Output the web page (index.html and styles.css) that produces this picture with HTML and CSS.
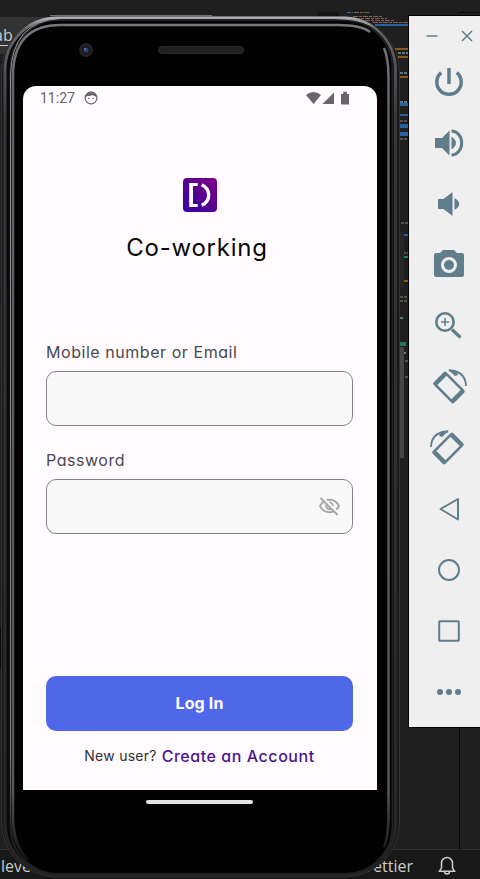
FILE: index.html
```html
<!DOCTYPE html>
<html lang="en">
<head>
<meta charset="utf-8">
<title>Co-working</title>
<link rel="stylesheet" href="styles.css">
</head>
<body>
<div class="desktop">
  <svg class="editor" width="480" height="879" viewBox="0 0 480 879" aria-hidden="true">
    <path fill="#1f1f1f" d="M0 0h480v879H0z"/>
    <path fill="#333" d="M0 17h45v37H0z"/>
    <path fill="#181818" d="M0 850h480v29H0z"/>
    <path fill="#333" d="M0 849h480v1H0z"/>
    <path fill="#0a0a0a" d="M459 12h1v838h-1zM459 12h21v1h-21zM0 62h10v1H0zM0 628h3v40H0zM0 387h3v1H0z"/>
    <path fill="#141414" d="M318 12h21v6h-21z"/>
    <path fill="#77717a" d="M50 15h162v1H50z"/>
    <path fill="none" stroke="#286ba5" stroke-width="1" stroke-dasharray="4 1" d="M347 12.500h6"/>
    <path fill="none" stroke="#8b5c50" stroke-width="1" stroke-dasharray="5 1 3 1" d="M354 12.500h15M353 16.500h30M355 18.500h32M365 20.500h30M373 22.500h35"/>
    <path fill="#2860a0" d="M375 24h33v2h-33zM400 103h8v3h-8zM400 114h8v2h-8zM400 124h8v4h-8zM400 132h8v4h-8zM403 234h5v2h-5z"/>
    <path fill="#8a5817" d="M395 48h13v2h-13zM398 56h10v2h-10zM400 76h8v2h-8zM403 280h5v2h-5z"/>
    <path fill="none" stroke="#557b85" stroke-width="2" stroke-dasharray="3 1" d="M398 53h10M400 73h8M400 102h8M400 318h4M403 353h4"/>
    <path fill="none" stroke="#68645a" stroke-width="1.500" stroke-dasharray="3 1" d="M400 121h8M400 139h8M401 223h7M403 253h5M400 297h8M400 301h8M405 361h3M405 377h3"/>
    <path fill="#237565" d="M403 256h5v2h-5zM400 342h6v4h-6z"/>
  </svg>
  <span class="menu-tail">ab</span>
  <span class="status-left">leve</span>
  <span class="status-right">Prettier</span>
  <svg class="bell" width="18" height="21" viewBox="0 0 18 21"><path d="M3.500 13V8a5.500 5.500 0 0 1 11 0v5l2 3.200h-15zM6.500 16.500a2.500 2.500 0 0 0 5 0"/></svg>

  <main class="phone">
    <svg class="shell" width="408" height="867" viewBox="0 12 408 867" aria-hidden="true">
      <defs>
        <linearGradient id="rim" x2="0" y2="1"><stop stop-color="#b0b4b6"/><stop offset=".012" stop-color="#656769"/><stop offset=".12" stop-color="#38383b"/><stop offset="1" stop-color="#252525"/></linearGradient>
        <linearGradient id="inner" gradientUnits="userSpaceOnUse" x1="0" y1="24" x2="0" y2="860"><stop stop-color="#77777c"/><stop offset=".1" stop-color="#626268"/><stop offset=".92" stop-color="#55555a"/><stop offset="1" stop-color="#111"/></linearGradient>
        <linearGradient id="edge" gradientUnits="userSpaceOnUse" x1="0" y1="18" x2="0" y2="840"><stop stop-color="#a2a5a8"/><stop offset=".1" stop-color="#8b8d90"/><stop offset=".9" stop-color="#77797c"/><stop offset="1" stop-color="#222"/></linearGradient>
      </defs>
      <path fill="#262626" d="M399 232h5v55h-5z"/><path fill="#464648" d="M400 347h4v111h-4z"/>
      <rect x="1.500" y="17" width="398" height="860" rx="55" fill="#171717" stroke="#333"/>
      <rect x="5" y="18" width="390.500" height="857" rx="52" fill="#090909" stroke="url(#rim)" stroke-width="3"/>
      <rect x="10.500" y="20" width="382" height="854" rx="48" fill="#020202" stroke="#202022" stroke-width="2"/>
      <path fill="none" stroke="url(#inner)" stroke-width="2.500" d="M28 860Q13 845 13 816V76Q13 25 61 25H338Q361 25 370 32M384 48Q388.500 58 388.500 78V820Q388 838 384 847"/>
      <path fill="none" stroke="url(#edge)" stroke-width="1" d="M20 850Q10.500 838 10.500 815V75Q12 21 60 18.500H335Q357 19 370 25"/>
    </svg>
    <div class="bezel">
      <svg width="14" height="14" viewBox="0 0 14 14"><circle cx="7" cy="7" r="7" fill="#222225"/><circle cx="7" cy="7" r="4" fill="#17192b"/><circle cx="7" cy="7" r="2.500" fill="#304371"/><circle cx="6" cy="6" r="1" fill="#667ca2"/></svg>
      <div class="speaker"></div>
    </div>
    <section class="screen">
      <header class="status">
        <span class="clock">11:27</span>
        <svg width="14" height="14" viewBox="0 0 14 14"><circle cx="7" cy="7" r="5.900" fill="none" stroke="#68666b" stroke-width="1.200"/><path fill="#68666b" d="M1 6Q2 1 7 .7T13 6L10 5 8.500 4 6 5 4 5z"/><circle cx="4.800" cy="7.500" r=".7" fill="#68666b"/><circle cx="9.200" cy="7.500" r=".7" fill="#68666b"/></svg>
        <svg class="signals" width="45" height="14" viewBox="0 0 45 14"><path fill="#68666b" d="M0 4Q7.500-2 15 4L7.500 13zM16.500 13L28 1.500V13zM35 3h2.300V.8h3.600V3H43v10.500h-8z"/></svg>
      </header>
      <div class="brand">
        <svg width="34" height="34" viewBox="0 0 34 34"><defs><linearGradient id="logo" x1="0" y1="1" x2="1" y2="0"><stop stop-color="#3900a6"/><stop offset=".5" stop-color="#57008e"/><stop offset="1" stop-color="#82008b"/></linearGradient></defs><rect width="34" height="34" rx="4" fill="url(#logo)"/><path fill="#fff" d="M6.200 5h8.500v3H10v18h4.700v3H6.200z"/><path fill="none" stroke="#fff" stroke-width="3.400" d="M18.700 6.700Q25.700 10 25.700 17T18.700 27.300"/></svg>
        <h1>Co-working</h1>
      </div>
      <form class="login">
        <label for="user">Mobile number or Email</label>
        <div class="field"><input id="user" type="text"></div>
        <label for="pass">Password</label>
        <div class="field"><input id="pass" type="password">
          <svg width="23" height="23" viewBox="0 0 24 24"><path fill="#a6a6a6" d="M12 6a9.770 9.770 0 0 1 8.820 5.500 9.650 9.650 0 0 1-2.410 3.120l1.410 1.410A11.800 11.800 0 0 0 23 11.500C21.270 7.110 17 4 12 4c-1.270 0-2.490.2-3.640.57l1.650 1.650C10.660 6.090 11.320 6 12 6zm-1.070 1.140L13 9.210c.57.25 1.030.71 1.280 1.280l2.070 2.070c.08-.34.140-.7.140-1.070C16.500 9.010 14.480 7 12 7c-.37 0-.72.05-1.070.14zM2.010 3.870l2.680 2.680A11.700 11.700 0 0 0 1 11.500C2.730 15.890 7 19 12 19c1.520 0 2.980-.29 4.320-.82l3.420 3.420 1.410-1.410L3.420 2.450zm7.500 7.500 2.610 2.610c-.04.01-.8.020-.12.020a2.500 2.500 0 0 1-2.500-2.500c0-.5.010-.8.010-.13zm-3.400-3.400 1.750 1.750a4.600 4.600 0 0 0-.36 1.780 4.500 4.500 0 0 0 6.270 4.140l.98.98c-.88.24-1.800.38-2.750.38a9.770 9.770 0 0 1-8.820-5.500c.7-1.430 1.720-2.610 2.930-3.530z"/></svg>
        </div>
        <button type="button">Log In</button>
        <p><span>New user?</span><a href="#">Create an Account</a></p>
      </form>
    </section>
    <div class="home-bar"></div>
  </main>

  <aside class="tools">
    <div class="window-controls">
      <svg width="12" height="12" viewBox="0 0 12 12"><path d="M.5 6h11"/></svg>
      <svg width="12" height="12" viewBox="0 0 12 12"><path d="M1 1l10 10M11 1L1 11"/></svg>
    </div>
    <div class="tool"><svg viewBox="-18 -18 36 36"><path class="line thick" d="M-7.800-9.300A12.200 12.200 0 1 0 7.800-9.300M0-14V2"/></svg></div>
    <div class="tool"><svg viewBox="-18 -18 36 36"><path class="fill" d="M-14-5h7l7.500-7.500v25l-7.500-7.500h-7zM2.500-6.500q9 6.500 0 13z"/><path class="line" stroke-width="3" d="M2.500-12a10.200 12 0 0 1 0 24"/></svg></div>
    <div class="tool"><svg viewBox="-18 -18 36 36"><path class="fill" d="M-11-5h5.500l9-7v24l-9-7H-11zM5.500-6q9.500 6 0 12z"/></svg></div>
    <div class="tool"><svg viewBox="-18 -18 36 36"><path fill-rule="evenodd" class="fill" d="M-13-12h4l3-3h11l3 3h5q2 0 2 2v20q0 2-2 2h-26q-2 0-2-2v-20q0-2 2-2zM0-8A8 8 0 1 0 0 8A8 8 0 0 0 0-8zM0-5A5 5 0 1 1 0 5A5 5 0 0 1 0-5z"/></svg></div>
    <div class="tool"><svg viewBox="-18 -18 36 36"><circle class="line" cx="-4" cy="-4" r="8.700" stroke-width="2.600"/><path class="line" stroke-width="1.500" d="M-8-4h8M-4-8v8"/><path class="line" stroke-width="3.200" d="M3 3.500l8.500 8"/></svg></div>
    <div class="tool"><svg viewBox="-18 -18 36 36"><g id="rotate"><path fill-rule="evenodd" class="fill" transform="translate(0 .5) rotate(45)" d="M-12.500-9h25q2 0 2 2V7q0 2-2 2h-25q-2 0-2-2V-7q0-2 2-2zM-10-6.500v13h20v-13z"/><path class="line" stroke-width="1.800" d="M0-16.500Q16.500-16 17-1"/><path class="fill" d="M-1-17.400L7-16.500 9-12 6-11z"/></g></svg></div>
    <div class="tool"><svg viewBox="-18 -18 36 36"><use href="#rotate" transform="translate(-1 0) scale(-1 1)"/></svg></div>
    <div class="tool"><svg viewBox="-18 -18 36 36"><path class="line" stroke-linejoin="round" d="M-8.500 0L9-10V10.500z"/></svg></div>
    <div class="tool"><svg viewBox="-18 -18 36 36"><circle class="line" r="10"/></svg></div>
    <div class="tool"><svg viewBox="-18 -18 36 36"><rect class="line" x="-9.800" y="-9.800" width="19.600" height="19.600" rx=".5"/></svg></div>
    <div class="tool"><svg viewBox="-18 -18 36 36"><circle class="fill" cx="-9" r="3"/><circle class="fill" r="3"/><circle class="fill" cx="9" r="3"/></svg></div>
  </aside>
</div>
</body>
</html>
```
FILE: styles.css
```css
* { box-sizing: border-box; }
body { margin: 0; background: #1f1f1f; }
.desktop { position: relative; width: 480px; height: 879px; overflow: hidden; font-family: "Open Sans", sans-serif; }
svg { display: block; flex: none; }
.editor { position: absolute; inset: 0; }
.menu-tail, .status-left, .status-right { position: absolute; color: #ccc; font-size: 16px; line-height: 20px; }
.menu-tail { left: -6px; top: 25px; text-decoration: underline; text-underline-offset: 4px; }
.status-left { left: 1px; top: 856px; }
.status-right { right: 67px; top: 856px; }
.bell { position: absolute; left: 438px; top: 855px; fill: none; stroke: #ccc; stroke-width: 1.5; }

.phone { position: absolute; left: 0; top: 12px; width: 408px; height: 867px; padding-left: 23px; }
.shell { position: absolute; inset: 0; }
.bezel { position: relative; height: 74px; padding: 31px 0 0 56px; display: flex; align-items: flex-start; }
.speaker { width: 86px; height: 8px; margin: 3px 0 0 65px; border-radius: 4px; background: #202222; border: 1px solid #2a2b2b; }
.screen { position: relative; width: 354px; height: 704px; background: #fffbff; border-radius: 13px 13px 0 0; font-family: Inter, sans-serif; font-feature-settings: "cv11"; }
.status { height: 24px; padding: 0 26px 0 17px; display: flex; align-items: center; }
.clock { width: 44px; font: 14px/16px Roboto, sans-serif; color: #68666b; letter-spacing: 0; }
.signals { margin-left: auto; }
.brand { padding-top: 68px; display: flex; flex-direction: column; align-items: center; }
h1 { margin: 19px 0 0; padding-right: 6px; font-size: 24px; line-height: 34px; font-weight: 400; color: #080808; letter-spacing: .75px; }
.brand svg { margin-right: 1px; }
.login { padding: 75px 24px 0 23px; display: flex; flex-direction: column; }
label { height: 31px; font-size: 16px; line-height: 24px; color: #4b494d; letter-spacing: .55px; }
.field { height: 55px; margin-bottom: 22px; border: 1px solid #85838a; border-radius: 10px; background: #f9f9f9; display: flex; align-items: center; padding-right: 11px; }
input { flex: 1; min-width: 0; border: 0; outline: 0; background: transparent; font: inherit; }
button { height: 55px; margin-top: 120px; border: 0; border-radius: 10px; background: #4f67e9; color: #fff; font: 700 16px/24px Inter, sans-serif; letter-spacing: .15px; padding-bottom: 2px; }
.login p { margin: 13px 0 0; display: flex; justify-content: center; gap: 5px; line-height: 24px; font-size: 14px; color: #303033; letter-spacing: .25px; }
.login a { color: #4b168c; font-weight: 500; font-size: 16px; text-decoration: none; letter-spacing: .55px; }
.home-bar { position: relative; width: 107px; height: 4px; margin: 10px 0 0 123px; border-radius: 2px; background: #e5e3e5; }

.tools { position: absolute; left: 408px; top: 15px; width: 73px; height: 713px; background: #efefef; border: 1px solid #000; }
.window-controls { height: 35px; padding: 14px 7px 0 17px; display: flex; justify-content: space-between; stroke: #607d8b; stroke-width: 1.5; }
.tool { height: 61px; padding-left: 22px; display: flex; align-items: center; }
.tool svg { width: 36px; height: 36px; overflow: visible; }
.line { fill: none; stroke: #607d8b; }
.line:not([stroke-width]) { stroke-width: 2; }
.line.thick { stroke-width: 3.5; }
.fill { fill: #607d8b; }
```
